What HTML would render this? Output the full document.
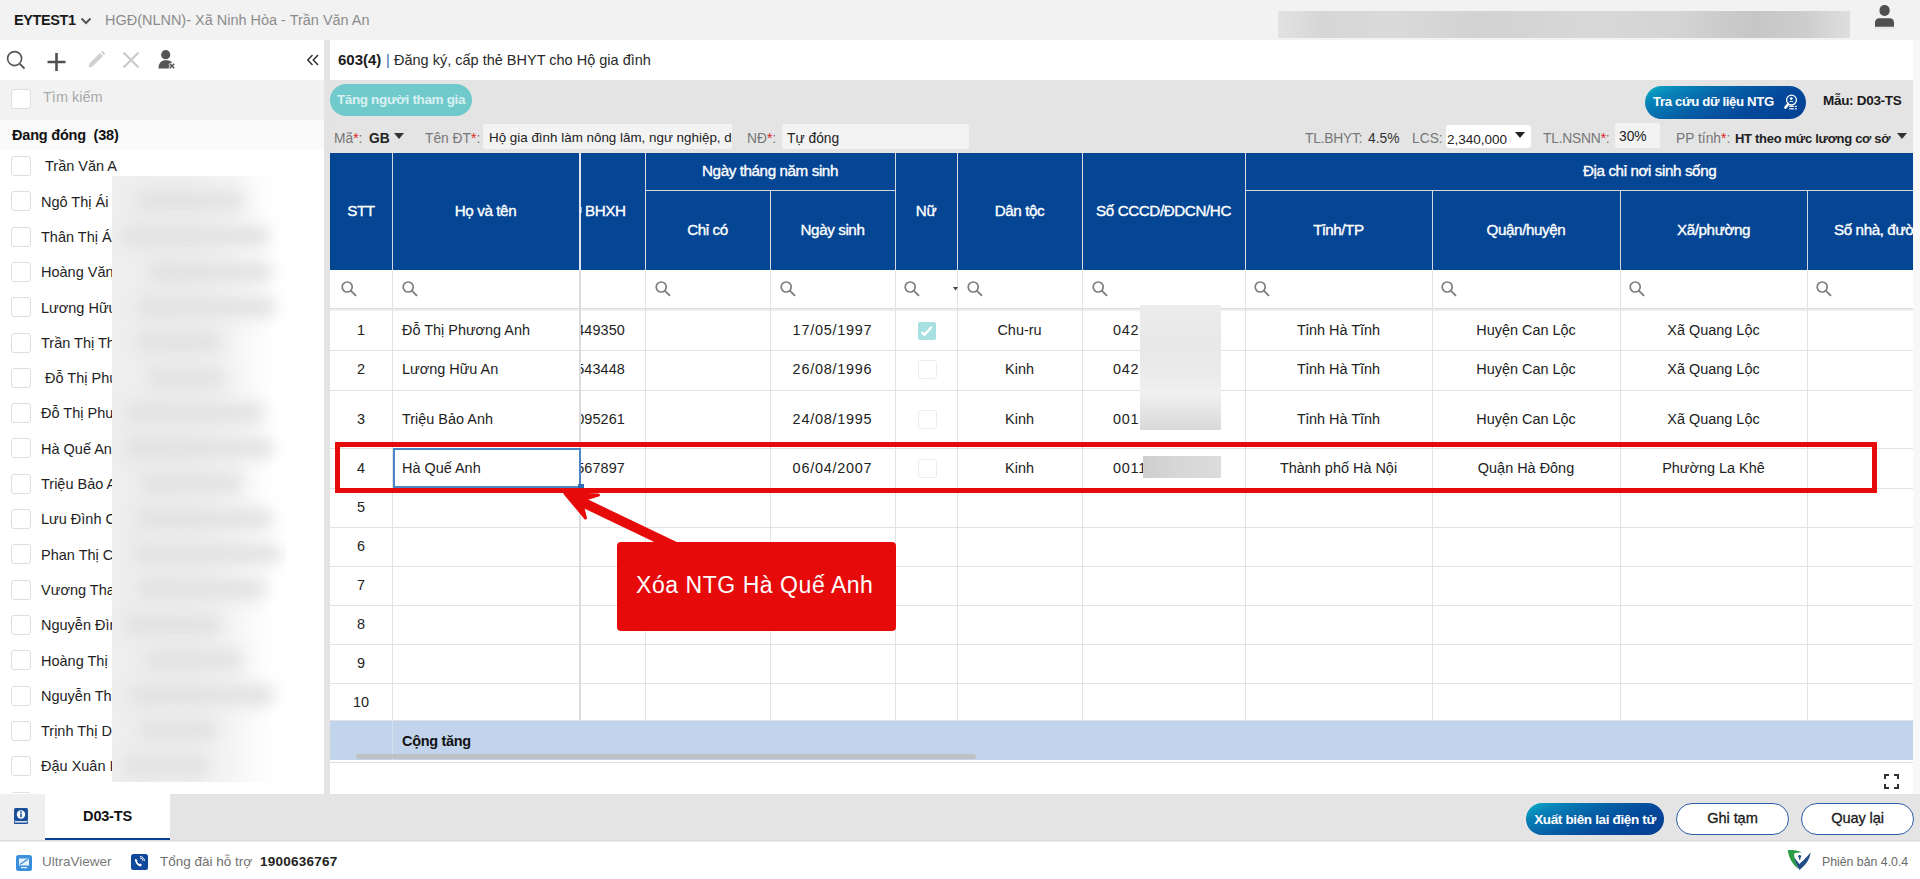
<!DOCTYPE html>
<html><head><meta charset="utf-8">
<style>
*{box-sizing:border-box;margin:0;padding:0}
html,body{width:1920px;height:879px;overflow:hidden;background:#f6f6f6;font-family:"Liberation Sans",sans-serif;color:#222}
.a{position:absolute}
.t{position:absolute;white-space:nowrap}
.cb{position:absolute;width:20px;height:20px;border:1px solid #dedede;border-radius:3px;background:#fff}
.cb2{position:absolute;width:20px;height:20px;border:1px solid #ececec;border-radius:3px;background:#fff}
svg{position:absolute;overflow:visible}
</style></head>
<body>

<div class="a" style="left:0px;top:0px;width:1920px;height:40px;background:#f2f2f2"></div>
<div class="t" style="left:14px;top:10.0px;height:20px;line-height:20px;font-size:14.5px;font-weight:bold;color:#1a1a1a;letter-spacing:-0.4px">EYTEST1</div>
<svg style="left:80px;top:16px" width="12" height="10" viewBox="0 0 12 10"><path d="M1.5 2.5 L6 7 L10.5 2.5" fill="none" stroke="#555" stroke-width="2"/></svg>
<div class="t" style="left:105px;top:10.0px;height:20px;line-height:20px;font-size:14.47px;font-weight:normal;color:#8c8c8c;">HGĐ(NLNN)- Xã Ninh Hòa - Trần Văn An</div>
<div class="a" style="left:1278px;top:11px;width:572px;height:27px;background:linear-gradient(90deg,#e2e2e2 0%,#d6d6d6 8%,#dadada 20%,#d2d2d2 35%,#d8d8d8 55%,#d4d4d4 70%,#c6c6c6 83%,#cdcdcd 92%,#dedede 100%);filter:blur(0.6px)"></div>
<svg style="left:1874px;top:4px" width="22" height="24" viewBox="0 0 22 24"><rect x="5.5" y="1" width="10.2" height="11" rx="5" fill="#505050"/><path d="M1 22.7 V18.7 Q1 14.2 5.5 14.2 H15.5 Q20 14.2 20 18.7 V22.7 Z" fill="#505050"/></svg>
<div class="a" style="left:1874px;top:27px;width:22px;height:4px;background:linear-gradient(180deg,rgba(0,0,0,0.05),rgba(0,0,0,0))"></div>
<div class="a" style="left:0px;top:40px;width:324px;height:754px;background:#fff"></div>
<div class="a" style="left:324px;top:40px;width:6px;height:754px;background:#e3e3e3"></div>
<svg style="left:6px;top:50px" width="20" height="20" viewBox="0 0 20 20"><circle cx="8.6" cy="8.6" r="7" fill="none" stroke="#555" stroke-width="1.6"/><path d="M13.8 13.8 L18.5 18.5" stroke="#555" stroke-width="1.8"/></svg>
<svg style="left:47px;top:52px" width="20" height="20" viewBox="0 0 20 20"><path d="M9.5 1 V19 M0.5 10 H18.5" stroke="#505050" stroke-width="2.6"/></svg>
<svg style="left:86px;top:50px" width="20" height="20" viewBox="0 0 20 20"><path d="M2.5 17.5 L3.5 13.5 L14 3 L17 6 L6.5 16.5 Z" fill="#cfcfcf"/><path d="M15 2 L16.5 0.8 L19.2 3.5 L18 5 Z" fill="#cfcfcf"/></svg>
<svg style="left:122px;top:51px" width="18" height="18" viewBox="0 0 18 18"><path d="M1.5 1.5 L16.5 16.5 M16.5 1.5 L1.5 16.5" stroke="#cccccc" stroke-width="2.4"/></svg>
<svg style="left:158px;top:49px" width="18" height="22" viewBox="0 0 18 22"><circle cx="7.7" cy="5.7" r="4.6" fill="#555"/><path d="M0.5 19.5 C0.5 12.5 5 11.2 7.7 11.2 C10.5 11.2 12.5 11.8 14 13 L11 19.5 Z" fill="#555"/><path d="M11.5 14.5 L16.5 19.5 M16.5 14.5 L11.5 19.5" stroke="#fff" stroke-width="3"/><path d="M11.8 14.8 L16.2 19.2 M16.2 14.8 L11.8 19.2" stroke="#555" stroke-width="1.6"/></svg>
<svg style="left:306px;top:53px" width="14" height="14" viewBox="0 0 14 14"><path d="M6.5 2 L1.8 7 L6.5 12 M12 2 L7.3 7 L12 12" fill="none" stroke="#333" stroke-width="1.5"/></svg>
<div class="a" style="left:0px;top:80px;width:324px;height:40px;background:#f2f2f2"></div>
<div class="cb" style="left:11px;top:89px"></div>
<div class="t" style="left:43px;top:87.0px;height:20px;line-height:20px;font-size:14.5px;font-weight:normal;color:#a9a9a9;">Tìm kiếm</div>
<div class="a" style="left:0px;top:120px;width:324px;height:30px;background:#fafafa"></div>
<div class="t" style="left:12px;top:125.0px;height:20px;line-height:20px;font-size:14.5px;font-weight:bold;color:#111;letter-spacing:-0.2px">Đang đóng&nbsp; (38)</div>
<div class="cb" style="left:11px;top:156.0px"></div>
<div class="t" style="left:45px;top:156.3px;height:20px;line-height:20px;font-size:14.5px;font-weight:normal;color:#1e1e1e;">Trần Văn A</div>
<div class="cb" style="left:11px;top:191.3px"></div>
<div class="t" style="left:41px;top:191.60000000000002px;height:20px;line-height:20px;font-size:14.5px;font-weight:normal;color:#1e1e1e;">Ngô Thị Ái</div>
<div class="cb" style="left:11px;top:226.6px"></div>
<div class="t" style="left:41px;top:226.9px;height:20px;line-height:20px;font-size:14.5px;font-weight:normal;color:#1e1e1e;">Thân Thị Á</div>
<div class="cb" style="left:11px;top:261.9px"></div>
<div class="t" style="left:41px;top:262.2px;height:20px;line-height:20px;font-size:14.5px;font-weight:normal;color:#1e1e1e;">Hoàng Văn</div>
<div class="cb" style="left:11px;top:297.2px"></div>
<div class="t" style="left:41px;top:297.5px;height:20px;line-height:20px;font-size:14.5px;font-weight:normal;color:#1e1e1e;">Lương Hữu</div>
<div class="cb" style="left:11px;top:332.5px"></div>
<div class="t" style="left:41px;top:332.8px;height:20px;line-height:20px;font-size:14.5px;font-weight:normal;color:#1e1e1e;">Trần Thị Th</div>
<div class="cb" style="left:11px;top:367.8px"></div>
<div class="t" style="left:45px;top:368.09999999999997px;height:20px;line-height:20px;font-size:14.5px;font-weight:normal;color:#1e1e1e;">Đỗ Thị Phu</div>
<div class="cb" style="left:11px;top:403.1px"></div>
<div class="t" style="left:41px;top:403.4px;height:20px;line-height:20px;font-size:14.5px;font-weight:normal;color:#1e1e1e;">Đỗ Thị Phu</div>
<div class="cb" style="left:11px;top:438.4px"></div>
<div class="t" style="left:41px;top:438.7px;height:20px;line-height:20px;font-size:14.5px;font-weight:normal;color:#1e1e1e;">Hà Quế An</div>
<div class="cb" style="left:11px;top:473.7px"></div>
<div class="t" style="left:41px;top:474.0px;height:20px;line-height:20px;font-size:14.5px;font-weight:normal;color:#1e1e1e;">Triệu Bảo A</div>
<div class="cb" style="left:11px;top:509.0px"></div>
<div class="t" style="left:41px;top:509.29999999999995px;height:20px;line-height:20px;font-size:14.5px;font-weight:normal;color:#1e1e1e;">Lưu Đình C</div>
<div class="cb" style="left:11px;top:544.3px"></div>
<div class="t" style="left:41px;top:544.5999999999999px;height:20px;line-height:20px;font-size:14.5px;font-weight:normal;color:#1e1e1e;">Phan Thị C</div>
<div class="cb" style="left:11px;top:579.6px"></div>
<div class="t" style="left:41px;top:579.8999999999999px;height:20px;line-height:20px;font-size:14.5px;font-weight:normal;color:#1e1e1e;">Vương Tha</div>
<div class="cb" style="left:11px;top:614.9px"></div>
<div class="t" style="left:41px;top:615.1999999999999px;height:20px;line-height:20px;font-size:14.5px;font-weight:normal;color:#1e1e1e;">Nguyễn Đìn</div>
<div class="cb" style="left:11px;top:650.2px"></div>
<div class="t" style="left:41px;top:650.4999999999999px;height:20px;line-height:20px;font-size:14.5px;font-weight:normal;color:#1e1e1e;">Hoàng Thị</div>
<div class="cb" style="left:11px;top:685.5px"></div>
<div class="t" style="left:41px;top:685.8px;height:20px;line-height:20px;font-size:14.5px;font-weight:normal;color:#1e1e1e;">Nguyễn Th</div>
<div class="cb" style="left:11px;top:720.8px"></div>
<div class="t" style="left:41px;top:721.0999999999999px;height:20px;line-height:20px;font-size:14.5px;font-weight:normal;color:#1e1e1e;">Trịnh Thị D</div>
<div class="cb" style="left:11px;top:756.1px"></div>
<div class="t" style="left:41px;top:756.3999999999999px;height:20px;line-height:20px;font-size:14.5px;font-weight:normal;color:#1e1e1e;">Đậu Xuân I</div>
<div class="a" style="left:12px;top:792px;width:18px;height:1px;background:#e2e2e2"></div>
<div class="a" style="left:112px;top:176px;width:175px;height:606px;overflow:hidden">
<div class="a" style="left:0;top:0;width:175px;height:606px;background:linear-gradient(90deg,#eeeeee 0%,#efefef 45%,#f5f5f5 70%,rgba(255,255,255,0) 93%)"></div>
<div class="a" style="left:23px;top:15px;width:110px;height:20px;background:#e1e1e1;filter:blur(8px);border-radius:10px"></div>
<div class="a" style="left:9px;top:50px;width:149px;height:20px;background:#e1e1e1;filter:blur(8px);border-radius:10px"></div>
<div class="a" style="left:34px;top:86px;width:127px;height:20px;background:#e1e1e1;filter:blur(8px);border-radius:10px"></div>
<div class="a" style="left:25px;top:121px;width:140px;height:20px;background:#e1e1e1;filter:blur(8px);border-radius:10px"></div>
<div class="a" style="left:24px;top:156px;width:88px;height:20px;background:#e1e1e1;filter:blur(8px);border-radius:10px"></div>
<div class="a" style="left:34px;top:192px;width:81px;height:20px;background:#e1e1e1;filter:blur(8px);border-radius:10px"></div>
<div class="a" style="left:13px;top:227px;width:140px;height:20px;background:#e1e1e1;filter:blur(8px);border-radius:10px"></div>
<div class="a" style="left:12px;top:262px;width:150px;height:20px;background:#e1e1e1;filter:blur(8px);border-radius:10px"></div>
<div class="a" style="left:27px;top:297px;width:104px;height:20px;background:#e1e1e1;filter:blur(8px);border-radius:10px"></div>
<div class="a" style="left:22px;top:333px;width:140px;height:20px;background:#e1e1e1;filter:blur(8px);border-radius:10px"></div>
<div class="a" style="left:20px;top:368px;width:150px;height:20px;background:#e1e1e1;filter:blur(8px);border-radius:10px"></div>
<div class="a" style="left:25px;top:403px;width:130px;height:20px;background:#e1e1e1;filter:blur(8px);border-radius:10px"></div>
<div class="a" style="left:12px;top:439px;width:99px;height:20px;background:#e1e1e1;filter:blur(8px);border-radius:10px"></div>
<div class="a" style="left:32px;top:474px;width:99px;height:20px;background:#e1e1e1;filter:blur(8px);border-radius:10px"></div>
<div class="a" style="left:17px;top:509px;width:146px;height:20px;background:#e1e1e1;filter:blur(8px);border-radius:10px"></div>
<div class="a" style="left:26px;top:544px;width:81px;height:20px;background:#e1e1e1;filter:blur(8px);border-radius:10px"></div>
<div class="a" style="left:10px;top:580px;width:88px;height:20px;background:#e1e1e1;filter:blur(8px);border-radius:10px"></div>
</div>
<div class="a" style="left:330px;top:40px;width:1583px;height:40px;background:#fff"></div>
<div class="a" style="left:1913px;top:40px;width:7px;height:754px;background:#f8f8f8"></div>
<div class="t" style="left:338px;top:49.5px;height:20px;line-height:20px;font-size:15px;font-weight:bold;color:#1a1a1a;">603(4)</div>
<div class="t" style="left:386px;top:49.5px;height:20px;line-height:20px;font-size:14.5px;font-weight:normal;color:#2f6db5;">|</div>
<div class="t" style="left:394px;top:49.5px;height:20px;line-height:20px;font-size:14.5px;font-weight:normal;color:#2a2a2a;">Đăng ký, cấp thẻ BHYT cho Hộ gia đình</div>
<div class="a" style="left:330px;top:80px;width:1583px;height:73px;background:#e4e4e4"></div>
<div class="a" style="left:330px;top:84px;width:142px;height:32px;background:#70cacb;border-radius:16px"></div>
<div class="t" style="left:330px;width:142px;text-align:center;top:90.0px;height:20px;line-height:20px;font-size:13.5px;font-weight:bold;color:#d9f1f1;letter-spacing:-0.35px">Tăng người tham gia</div>
<div class="a" style="left:1645px;top:86px;width:161px;height:33px;background:linear-gradient(155deg,#0ab0c6 0%,#0781b8 18%,#0560a6 42%,#04489a 68%,#033f91 100%);border-radius:17px"></div>
<div class="t" style="left:1653px;top:92.0px;height:20px;line-height:20px;font-size:13.2px;font-weight:bold;color:#fff;letter-spacing:-0.35px">Tra cứu dữ liệu NTG</div>
<svg style="left:1782px;top:94px" width="17" height="17" viewBox="0 0 17 17"><circle cx="9.5" cy="6.1" r="4.9" fill="none" stroke="#fff" stroke-width="1.3"/><circle cx="9.3" cy="4.6" r="1.4" fill="#fff"/><path d="M7 8.4 C7.4 6.9 11.2 6.9 11.6 8.4" fill="none" stroke="#fff" stroke-width="1"/><path d="M5.8 10.6 L3.4 13.6" stroke="#fff" stroke-width="2.6" stroke-linecap="round"/><rect x="7.2" y="11.8" width="4.6" height="1.2" fill="#fff"/><rect x="12.8" y="11.8" width="2" height="1.2" fill="#fff"/><rect x="7.2" y="14.2" width="4.6" height="1.2" fill="#fff"/><rect x="12.8" y="14.2" width="2" height="1.2" fill="#fff"/></svg>
<div class="t" style="left:1823px;top:91.0px;height:20px;line-height:20px;font-size:13.5px;font-weight:bold;color:#1a1a1a;letter-spacing:-0.3px">Mẫu: D03-TS</div>
<div class="t" style="left:334px;top:128.5px;height:20px;line-height:20px;font-size:13.8px;font-weight:normal;color:#777;">Mã<span style="color:#e02020">*</span>:</div>
<div class="t" style="left:369px;top:128.5px;height:20px;line-height:20px;font-size:13.8px;font-weight:bold;color:#222;">GB</div>
<svg style="left:394px;top:133px" width="10" height="6" viewBox="0 0 10 6"><path d="M0 0 H10 L5 6 Z" fill="#333"/></svg>
<div class="t" style="left:425px;top:128.5px;height:20px;line-height:20px;font-size:13.8px;font-weight:normal;color:#777;">Tên ĐT<span style="color:#e02020">*</span>:</div>
<div class="a" style="left:483px;top:124px;width:249px;height:25px;background:#f3f3f3;border-radius:3px;overflow:hidden"></div>
<div class="a" style="left:483px;top:124px;width:249px;height:25px;overflow:hidden">
<div class="t" style="left:6px;top:4.0px;height:20px;line-height:20px;font-size:13.4px;font-weight:normal;color:#222;">Hộ gia đình làm nông lâm, ngư nghiệp, d</div>
</div>
<div class="t" style="left:747px;top:128.5px;height:20px;line-height:20px;font-size:13.8px;font-weight:normal;color:#777;">NĐ<span style="color:#e02020">*</span>:</div>
<div class="a" style="left:782px;top:124px;width:187px;height:25px;background:#f3f3f3;border-radius:3px"></div>
<div class="t" style="left:787px;top:128.5px;height:20px;line-height:20px;font-size:13.8px;font-weight:normal;color:#222;">Tự đóng</div>
<div class="t" style="left:1305px;top:128.5px;height:20px;line-height:20px;font-size:13.8px;font-weight:normal;color:#777;letter-spacing:-0.2px">TL.BHYT:</div>
<div class="t" style="left:1368px;top:128.5px;height:20px;line-height:20px;font-size:13.8px;font-weight:normal;color:#333;">4.5%</div>
<div class="t" style="left:1412px;top:128.5px;height:20px;line-height:20px;font-size:13.8px;font-weight:normal;color:#777;">LCS:</div>
<div class="a" style="left:1446px;top:125px;width:85px;height:23px;background:#fff;border-radius:3px"></div>
<div class="t" style="left:1447px;top:129.5px;height:20px;line-height:20px;font-size:13.5px;font-weight:normal;color:#222;">2,340,000</div>
<svg style="left:1515px;top:132px" width="10" height="6" viewBox="0 0 10 6"><path d="M0 0 H10 L5 6 Z" fill="#222"/></svg>
<div class="t" style="left:1543px;top:128.5px;height:20px;line-height:20px;font-size:13.8px;font-weight:normal;color:#777;letter-spacing:-0.2px">TL.NSNN<span style="color:#e02020">*</span>:</div>
<div class="a" style="left:1615px;top:123px;width:45px;height:25px;background:#f3f3f3;border-radius:3px"></div>
<div class="t" style="left:1619px;top:126.5px;height:20px;line-height:20px;font-size:13.8px;font-weight:normal;color:#222;">30%</div>
<div class="t" style="left:1676px;top:128.5px;height:20px;line-height:20px;font-size:13.8px;font-weight:normal;color:#777;">PP tính<span style="color:#e02020">*</span>:</div>
<div class="t" style="left:1735px;top:129.0px;height:20px;line-height:20px;font-size:13px;font-weight:bold;color:#222;letter-spacing:-0.3px">HT theo mức lương cơ sở</div>
<svg style="left:1897px;top:133px" width="10" height="6" viewBox="0 0 10 6"><path d="M0 0 H10 L5 6 Z" fill="#333"/></svg>
<div class="a" style="left:330px;top:153px;width:1583px;height:641px;background:#fff;overflow:hidden">
<div class="a" style="left:0px;top:0px;width:1583px;height:117px;background:#044594"></div>
<div class="a" style="left:62px;top:0px;width:1px;height:117px;background:#d3d8e0"></div>
<div class="a" style="left:315px;top:0px;width:1px;height:117px;background:#d3d8e0"></div>
<div class="a" style="left:440px;top:37px;width:1px;height:80px;background:#d3d8e0"></div>
<div class="a" style="left:627px;top:0px;width:1px;height:117px;background:#d3d8e0"></div>
<div class="a" style="left:752px;top:0px;width:1px;height:117px;background:#d3d8e0"></div>
<div class="a" style="left:915px;top:0px;width:1px;height:117px;background:#d3d8e0"></div>
<div class="a" style="left:1102px;top:37px;width:1px;height:80px;background:#d3d8e0"></div>
<div class="a" style="left:1290px;top:37px;width:1px;height:80px;background:#d3d8e0"></div>
<div class="a" style="left:1477px;top:37px;width:1px;height:80px;background:#d3d8e0"></div>
<div class="a" style="left:565px;top:0px;width:1px;height:117px;background:#d3d8e0"></div>
<div class="a" style="left:249px;top:0px;width:2px;height:117px;background:#dfe5ef"></div>
<div class="a" style="left:315px;top:37px;width:250px;height:1px;background:#d3d8e0"></div>
<div class="a" style="left:915px;top:37px;width:668px;height:1px;background:#d3d8e0"></div>
<div class="t" style="left:0px;width:62px;text-align:center;top:47.69999999999999px;height:20px;line-height:20px;font-size:15.2px;font-weight:normal;color:#fff;letter-spacing:-0.4px;-webkit-text-stroke:0.35px #fff">STT</div>
<div class="t" style="left:62px;width:187px;text-align:center;top:47.69999999999999px;height:20px;line-height:20px;font-size:15.2px;font-weight:normal;color:#fff;letter-spacing:-0.4px;-webkit-text-stroke:0.35px #fff">Họ và tên</div>
<div class="t" style="left:255px;top:47.69999999999999px;height:20px;line-height:20px;font-size:15.2px;font-weight:normal;color:#fff;letter-spacing:-0.4px;-webkit-text-stroke:0.35px #fff">BHXH</div>
<div class="a" style="left:250px;top:54px;width:2px;height:6px;background:#fff;opacity:0.5"></div>
<div class="t" style="left:315px;width:250px;text-align:center;top:8.199999999999989px;height:20px;line-height:20px;font-size:15.2px;font-weight:normal;color:#fff;letter-spacing:-0.4px;-webkit-text-stroke:0.35px #fff">Ngày tháng năm sinh</div>
<div class="t" style="left:315px;width:125px;text-align:center;top:66.69999999999999px;height:20px;line-height:20px;font-size:15.2px;font-weight:normal;color:#fff;letter-spacing:-0.4px;-webkit-text-stroke:0.35px #fff">Chỉ có</div>
<div class="t" style="left:440px;width:125px;text-align:center;top:66.69999999999999px;height:20px;line-height:20px;font-size:15.2px;font-weight:normal;color:#fff;letter-spacing:-0.4px;-webkit-text-stroke:0.35px #fff">Ngày sinh</div>
<div class="t" style="left:565px;width:62px;text-align:center;top:47.69999999999999px;height:20px;line-height:20px;font-size:15.2px;font-weight:normal;color:#fff;letter-spacing:-0.4px;-webkit-text-stroke:0.35px #fff">Nữ</div>
<div class="t" style="left:627px;width:125px;text-align:center;top:47.69999999999999px;height:20px;line-height:20px;font-size:15.2px;font-weight:normal;color:#fff;letter-spacing:-0.4px;-webkit-text-stroke:0.35px #fff">Dân tộc</div>
<div class="t" style="left:752px;width:163px;text-align:center;top:47.69999999999999px;height:20px;line-height:20px;font-size:15.2px;font-weight:normal;color:#fff;letter-spacing:-0.4px;-webkit-text-stroke:0.35px #fff">Số CCCD/ĐDCN/HC</div>
<div class="t" style="left:1253px;top:8.199999999999989px;height:20px;line-height:20px;font-size:15.2px;font-weight:normal;color:#fff;letter-spacing:-0.4px;-webkit-text-stroke:0.35px #fff">Địa chỉ nơi sinh sống</div>
<div class="t" style="left:915px;width:187px;text-align:center;top:66.69999999999999px;height:20px;line-height:20px;font-size:15.2px;font-weight:normal;color:#fff;letter-spacing:-0.4px;-webkit-text-stroke:0.35px #fff">Tỉnh/TP</div>
<div class="t" style="left:1102px;width:188px;text-align:center;top:66.69999999999999px;height:20px;line-height:20px;font-size:15.2px;font-weight:normal;color:#fff;letter-spacing:-0.4px;-webkit-text-stroke:0.35px #fff">Quận/huyện</div>
<div class="t" style="left:1290px;width:187px;text-align:center;top:66.69999999999999px;height:20px;line-height:20px;font-size:15.2px;font-weight:normal;color:#fff;letter-spacing:-0.4px;-webkit-text-stroke:0.35px #fff">Xã/phường</div>
<div class="t" style="left:1504px;top:66.69999999999999px;height:20px;line-height:20px;font-size:15.2px;font-weight:normal;color:#fff;letter-spacing:-0.4px;-webkit-text-stroke:0.35px #fff">Số nhà, đường</div>
<div class="a" style="left:0px;top:155px;width:1583px;height:1px;background:#dcdcdc"></div>
<div class="a" style="left:0px;top:156px;width:1583px;height:2px;background:#efefef"></div>
<div class="a" style="left:0px;top:197px;width:1583px;height:1px;background:#e2e2e2"></div>
<div class="a" style="left:0px;top:237px;width:1583px;height:1px;background:#e2e2e2"></div>
<div class="a" style="left:0px;top:295px;width:1583px;height:1px;background:#e2e2e2"></div>
<div class="a" style="left:0px;top:335px;width:1583px;height:1px;background:#e2e2e2"></div>
<div class="a" style="left:0px;top:374px;width:1583px;height:1px;background:#e2e2e2"></div>
<div class="a" style="left:0px;top:413px;width:1583px;height:1px;background:#e2e2e2"></div>
<div class="a" style="left:0px;top:452px;width:1583px;height:1px;background:#e2e2e2"></div>
<div class="a" style="left:0px;top:491px;width:1583px;height:1px;background:#e2e2e2"></div>
<div class="a" style="left:0px;top:530px;width:1583px;height:1px;background:#e2e2e2"></div>
<div class="a" style="left:0px;top:567px;width:1583px;height:1px;background:#e2e2e2"></div>
<div class="a" style="left:62px;top:117px;width:1px;height:451px;background:#e2e2e2"></div>
<div class="a" style="left:315px;top:117px;width:1px;height:451px;background:#e2e2e2"></div>
<div class="a" style="left:440px;top:117px;width:1px;height:451px;background:#e2e2e2"></div>
<div class="a" style="left:565px;top:117px;width:1px;height:451px;background:#e2e2e2"></div>
<div class="a" style="left:627px;top:117px;width:1px;height:451px;background:#e2e2e2"></div>
<div class="a" style="left:752px;top:117px;width:1px;height:451px;background:#e2e2e2"></div>
<div class="a" style="left:915px;top:117px;width:1px;height:451px;background:#e2e2e2"></div>
<div class="a" style="left:1102px;top:117px;width:1px;height:451px;background:#e2e2e2"></div>
<div class="a" style="left:1290px;top:117px;width:1px;height:451px;background:#e2e2e2"></div>
<div class="a" style="left:1477px;top:117px;width:1px;height:451px;background:#e2e2e2"></div>
<div class="a" style="left:249px;top:117px;width:2px;height:451px;background:#dcdcdc"></div>
<svg style="left:10px;top:127px" width="16" height="16" viewBox="0 0 16 16"><circle cx="7.2" cy="7" r="5" fill="none" stroke="#7d7d7d" stroke-width="1.7"/><path d="M10.8 10.6 L16 15.8" stroke="#7d7d7d" stroke-width="1.9"/></svg>
<svg style="left:71px;top:127px" width="16" height="16" viewBox="0 0 16 16"><circle cx="7.2" cy="7" r="5" fill="none" stroke="#7d7d7d" stroke-width="1.7"/><path d="M10.8 10.6 L16 15.8" stroke="#7d7d7d" stroke-width="1.9"/></svg>
<svg style="left:324px;top:127px" width="16" height="16" viewBox="0 0 16 16"><circle cx="7.2" cy="7" r="5" fill="none" stroke="#7d7d7d" stroke-width="1.7"/><path d="M10.8 10.6 L16 15.8" stroke="#7d7d7d" stroke-width="1.9"/></svg>
<svg style="left:449px;top:127px" width="16" height="16" viewBox="0 0 16 16"><circle cx="7.2" cy="7" r="5" fill="none" stroke="#7d7d7d" stroke-width="1.7"/><path d="M10.8 10.6 L16 15.8" stroke="#7d7d7d" stroke-width="1.9"/></svg>
<svg style="left:573px;top:127px" width="16" height="16" viewBox="0 0 16 16"><circle cx="7.2" cy="7" r="5" fill="none" stroke="#7d7d7d" stroke-width="1.7"/><path d="M10.8 10.6 L16 15.8" stroke="#7d7d7d" stroke-width="1.9"/></svg>
<svg style="left:636px;top:127px" width="16" height="16" viewBox="0 0 16 16"><circle cx="7.2" cy="7" r="5" fill="none" stroke="#7d7d7d" stroke-width="1.7"/><path d="M10.8 10.6 L16 15.8" stroke="#7d7d7d" stroke-width="1.9"/></svg>
<svg style="left:761px;top:127px" width="16" height="16" viewBox="0 0 16 16"><circle cx="7.2" cy="7" r="5" fill="none" stroke="#7d7d7d" stroke-width="1.7"/><path d="M10.8 10.6 L16 15.8" stroke="#7d7d7d" stroke-width="1.9"/></svg>
<svg style="left:923px;top:127px" width="16" height="16" viewBox="0 0 16 16"><circle cx="7.2" cy="7" r="5" fill="none" stroke="#7d7d7d" stroke-width="1.7"/><path d="M10.8 10.6 L16 15.8" stroke="#7d7d7d" stroke-width="1.9"/></svg>
<svg style="left:1110px;top:127px" width="16" height="16" viewBox="0 0 16 16"><circle cx="7.2" cy="7" r="5" fill="none" stroke="#7d7d7d" stroke-width="1.7"/><path d="M10.8 10.6 L16 15.8" stroke="#7d7d7d" stroke-width="1.9"/></svg>
<svg style="left:1298px;top:127px" width="16" height="16" viewBox="0 0 16 16"><circle cx="7.2" cy="7" r="5" fill="none" stroke="#7d7d7d" stroke-width="1.7"/><path d="M10.8 10.6 L16 15.8" stroke="#7d7d7d" stroke-width="1.9"/></svg>
<svg style="left:1485px;top:127px" width="16" height="16" viewBox="0 0 16 16"><circle cx="7.2" cy="7" r="5" fill="none" stroke="#7d7d7d" stroke-width="1.7"/><path d="M10.8 10.6 L16 15.8" stroke="#7d7d7d" stroke-width="1.9"/></svg>
<svg style="left:623px;top:134px" width="5" height="4" viewBox="0 0 5 4"><path d="M0 0 H5 L2.5 3.5 Z" fill="#444"/></svg>
<div class="t" style="left:0px;width:62px;text-align:center;top:167.0px;height:20px;line-height:20px;font-size:14.45px;font-weight:normal;color:#222;">1</div>
<div class="t" style="left:72px;top:167.0px;height:20px;line-height:20px;font-size:14.45px;font-weight:normal;color:#1e1e1e;">Đỗ Thị Phương Anh</div>
<div class="a" style="left:251px;top:167px;width:64px;height:20px;overflow:hidden">
<div class="t" style="right:20px;top:0;height:20px;line-height:20px;font-size:14.45px;color:#1e1e1e;letter-spacing:0.1px">449350</div>
</div>
<div class="t" style="left:440px;width:125px;text-align:center;top:167.0px;height:20px;line-height:20px;font-size:14.45px;font-weight:normal;color:#222;letter-spacing:0.75px">17/05/1997</div>
<div class="a" style="left:588px;top:169px;width:18px;height:18px;background:#a6e0e0;border-radius:2px"></div>
<svg style="left:588px;top:169px" width="18" height="18" viewBox="0 0 18 18"><path d="M3.6 10.2 L6.5 12.9 L13.8 4.8" fill="none" stroke="#fff" stroke-width="2.4"/></svg>
<div class="t" style="left:627px;width:125px;text-align:center;top:167.0px;height:20px;line-height:20px;font-size:14.45px;font-weight:normal;color:#222;">Chu-ru</div>
<div class="t" style="left:783px;top:167.0px;height:20px;line-height:20px;font-size:14.45px;font-weight:normal;color:#222;letter-spacing:0.75px">042</div>
<div class="t" style="left:915px;width:187px;text-align:center;top:167.0px;height:20px;line-height:20px;font-size:14.45px;font-weight:normal;color:#222;">Tỉnh Hà Tĩnh</div>
<div class="t" style="left:1102px;width:188px;text-align:center;top:167.0px;height:20px;line-height:20px;font-size:14.45px;font-weight:normal;color:#222;">Huyện Can Lộc</div>
<div class="t" style="left:1290px;width:187px;text-align:center;top:167.0px;height:20px;line-height:20px;font-size:14.45px;font-weight:normal;color:#222;">Xã Quang Lộc</div>
<div class="t" style="left:0px;width:62px;text-align:center;top:205.5px;height:20px;line-height:20px;font-size:14.45px;font-weight:normal;color:#222;">2</div>
<div class="t" style="left:72px;top:205.5px;height:20px;line-height:20px;font-size:14.45px;font-weight:normal;color:#1e1e1e;">Lương Hữu An</div>
<div class="a" style="left:251px;top:205.5px;width:64px;height:20px;overflow:hidden">
<div class="t" style="right:20px;top:0;height:20px;line-height:20px;font-size:14.45px;color:#1e1e1e;letter-spacing:0.1px">543448</div>
</div>
<div class="t" style="left:440px;width:125px;text-align:center;top:205.5px;height:20px;line-height:20px;font-size:14.45px;font-weight:normal;color:#222;letter-spacing:0.75px">26/08/1996</div>
<div class="cb2" style="left:587.5px;top:206.5px;width:19px;height:19px"></div>
<div class="t" style="left:627px;width:125px;text-align:center;top:205.5px;height:20px;line-height:20px;font-size:14.45px;font-weight:normal;color:#222;">Kinh</div>
<div class="t" style="left:783px;top:205.5px;height:20px;line-height:20px;font-size:14.45px;font-weight:normal;color:#222;letter-spacing:0.75px">042</div>
<div class="t" style="left:915px;width:187px;text-align:center;top:205.5px;height:20px;line-height:20px;font-size:14.45px;font-weight:normal;color:#222;">Tỉnh Hà Tĩnh</div>
<div class="t" style="left:1102px;width:188px;text-align:center;top:205.5px;height:20px;line-height:20px;font-size:14.45px;font-weight:normal;color:#222;">Huyện Can Lộc</div>
<div class="t" style="left:1290px;width:187px;text-align:center;top:205.5px;height:20px;line-height:20px;font-size:14.45px;font-weight:normal;color:#222;">Xã Quang Lộc</div>
<div class="t" style="left:0px;width:62px;text-align:center;top:255.5px;height:20px;line-height:20px;font-size:14.45px;font-weight:normal;color:#222;">3</div>
<div class="t" style="left:72px;top:255.5px;height:20px;line-height:20px;font-size:14.45px;font-weight:normal;color:#1e1e1e;">Triệu Bảo Anh</div>
<div class="a" style="left:251px;top:255.5px;width:64px;height:20px;overflow:hidden">
<div class="t" style="right:20px;top:0;height:20px;line-height:20px;font-size:14.45px;color:#1e1e1e;letter-spacing:0.1px">095261</div>
</div>
<div class="t" style="left:440px;width:125px;text-align:center;top:255.5px;height:20px;line-height:20px;font-size:14.45px;font-weight:normal;color:#222;letter-spacing:0.75px">24/08/1995</div>
<div class="cb2" style="left:587.5px;top:256.5px;width:19px;height:19px"></div>
<div class="t" style="left:627px;width:125px;text-align:center;top:255.5px;height:20px;line-height:20px;font-size:14.45px;font-weight:normal;color:#222;">Kinh</div>
<div class="t" style="left:783px;top:255.5px;height:20px;line-height:20px;font-size:14.45px;font-weight:normal;color:#222;letter-spacing:0.75px">001</div>
<div class="t" style="left:915px;width:187px;text-align:center;top:255.5px;height:20px;line-height:20px;font-size:14.45px;font-weight:normal;color:#222;">Tỉnh Hà Tĩnh</div>
<div class="t" style="left:1102px;width:188px;text-align:center;top:255.5px;height:20px;line-height:20px;font-size:14.45px;font-weight:normal;color:#222;">Huyện Can Lộc</div>
<div class="t" style="left:1290px;width:187px;text-align:center;top:255.5px;height:20px;line-height:20px;font-size:14.45px;font-weight:normal;color:#222;">Xã Quang Lộc</div>
<div class="t" style="left:0px;width:62px;text-align:center;top:304.5px;height:20px;line-height:20px;font-size:14.45px;font-weight:normal;color:#222;">4</div>
<div class="t" style="left:72px;top:304.5px;height:20px;line-height:20px;font-size:14.45px;font-weight:normal;color:#1e1e1e;">Hà Quế Anh</div>
<div class="a" style="left:251px;top:304.5px;width:64px;height:20px;overflow:hidden">
<div class="t" style="right:20px;top:0;height:20px;line-height:20px;font-size:14.45px;color:#1e1e1e;letter-spacing:0.1px">567897</div>
</div>
<div class="t" style="left:440px;width:125px;text-align:center;top:304.5px;height:20px;line-height:20px;font-size:14.45px;font-weight:normal;color:#222;letter-spacing:0.75px">06/04/2007</div>
<div class="cb2" style="left:587.5px;top:305.5px;width:19px;height:19px"></div>
<div class="t" style="left:627px;width:125px;text-align:center;top:304.5px;height:20px;line-height:20px;font-size:14.45px;font-weight:normal;color:#222;">Kinh</div>
<div class="t" style="left:783px;top:304.5px;height:20px;line-height:20px;font-size:14.45px;font-weight:normal;color:#222;letter-spacing:0.75px">0011</div>
<div class="t" style="left:915px;width:187px;text-align:center;top:304.5px;height:20px;line-height:20px;font-size:14.45px;font-weight:normal;color:#222;">Thành phố Hà Nội</div>
<div class="t" style="left:1102px;width:188px;text-align:center;top:304.5px;height:20px;line-height:20px;font-size:14.45px;font-weight:normal;color:#222;">Quận Hà Đông</div>
<div class="t" style="left:1290px;width:187px;text-align:center;top:304.5px;height:20px;line-height:20px;font-size:14.45px;font-weight:normal;color:#222;">Phường La Khê</div>
<div class="a" style="left:810px;top:152px;width:81px;height:125px;background:linear-gradient(180deg,#ececec 0%,#e8e8e8 30%,#ebebeb 55%,#f0f0f0 70%,#e2e2e2 88%,#d9d9d9 100%);border-radius:1px"></div>
<div class="a" style="left:813px;top:303px;width:78px;height:22px;background:linear-gradient(90deg,#cfcfcf 0%,#d6d6d6 40%,#dcdcdc 100%)"></div>
<div class="t" style="left:0px;width:62px;text-align:center;top:344.0px;height:20px;line-height:20px;font-size:14.45px;font-weight:normal;color:#222;">5</div>
<div class="t" style="left:0px;width:62px;text-align:center;top:383.0px;height:20px;line-height:20px;font-size:14.45px;font-weight:normal;color:#222;">6</div>
<div class="t" style="left:0px;width:62px;text-align:center;top:422.0px;height:20px;line-height:20px;font-size:14.45px;font-weight:normal;color:#222;">7</div>
<div class="t" style="left:0px;width:62px;text-align:center;top:461.0px;height:20px;line-height:20px;font-size:14.45px;font-weight:normal;color:#222;">8</div>
<div class="t" style="left:0px;width:62px;text-align:center;top:499.5px;height:20px;line-height:20px;font-size:14.45px;font-weight:normal;color:#222;">9</div>
<div class="t" style="left:0px;width:62px;text-align:center;top:538.5px;height:20px;line-height:20px;font-size:14.45px;font-weight:normal;color:#222;">10</div>
<div class="a" style="left:63px;top:295px;width:188px;height:40px;border:2px solid #4d86c6;background:transparent"></div>
<div class="a" style="left:248px;top:331px;width:6px;height:6px;background:#2f6db5"></div>
<div class="a" style="left:0px;top:568px;width:1583px;height:39px;background:#c2d4ec"></div>
<div class="a" style="left:62px;top:568px;width:1px;height:39px;background:#d6e0ee"></div>
<div class="t" style="left:72px;top:577.5px;height:20px;line-height:20px;font-size:14.45px;font-weight:bold;color:#111;letter-spacing:-0.3px">Cộng tăng</div>
<div class="a" style="left:26px;top:601px;width:620px;height:5px;background:#bdbdbd;border-radius:2px;opacity:0.85"></div>
<div class="a" style="left:0px;top:609px;width:1583px;height:1px;background:#dedede"></div>
<svg style="left:1554px;top:621px" width="15" height="15" viewBox="0 0 15 15"><path d="M1 5 V1 H5 M10 1 H14 V5 M14 10 V14 H10 M5 14 H1 V10" fill="none" stroke="#333" stroke-width="2"/></svg>
</div>
<div class="a" style="left:335px;top:442px;width:1542px;height:51px;border:5px solid #e60a0a"></div>
<svg style="left:0;top:0" width="1920" height="879" viewBox="0 0 1920 879"><path d="M584 497.6 L706 556 L683.5 556 L581 506.9 Z" fill="#e60a0a"/><path d="M565 493.5 L598.5 495 L585 499 L582.5 506 L585.5 518 Z" fill="#e60a0a" stroke="#e60a0a" stroke-width="3" stroke-linejoin="round"/></svg>
<div class="a" style="left:617px;top:542px;width:279px;height:89px;background:#e60a0a;border-radius:4px"></div>
<div class="t" style="left:636px;top:569.5px;height:30px;line-height:30px;font-size:23px;font-weight:normal;color:#fff;letter-spacing:0.55px">Xóa NTG Hà Quế Anh</div>
<div class="a" style="left:0px;top:794px;width:1920px;height:46px;background:#e4e4e4"></div>
<div class="a" style="left:0px;top:794px;width:45px;height:46px;background:#efefef"></div>
<div class="a" style="left:45px;top:794px;width:125px;height:46px;background:#fff"></div>
<div class="a" style="left:45px;top:838px;width:125px;height:2px;background:#0b3f91"></div>
<div class="a" style="left:0px;top:840px;width:1920px;height:2px;background:linear-gradient(180deg,#d4d4d4,#f2f2f2)"></div>
<div class="t" style="left:45px;width:125px;text-align:center;top:806.0px;height:20px;line-height:20px;font-size:14.5px;font-weight:bold;color:#111;letter-spacing:-0.2px">D03-TS</div>
<svg style="left:14px;top:808px" width="14" height="16" viewBox="0 0 14 16"><rect x="0" y="0" width="14" height="13" rx="1.5" fill="#1b4f98"/><rect x="0" y="13" width="14" height="3" rx="1" fill="#1b4f98"/><rect x="1" y="13.2" width="12" height="1.3" fill="#fff"/><circle cx="7" cy="6.5" r="4.2" fill="#fff"/><rect x="6.2" y="5.5" width="1.6" height="3.8" fill="#1b4f98"/><circle cx="7" cy="4" r="0.9" fill="#1b4f98"/></svg>
<div class="a" style="left:1526px;top:803px;width:138px;height:32px;background:linear-gradient(155deg,#0ab0c6 0%,#0781b8 18%,#0560a6 42%,#04489a 68%,#033f91 100%);border-radius:16px"></div>
<div class="t" style="left:1526px;width:138px;text-align:center;top:809.5px;height:20px;line-height:20px;font-size:13.5px;font-weight:bold;color:#fff;letter-spacing:-0.35px">Xuất biên lai điện tử</div>
<div class="a" style="left:1676px;top:803px;width:113px;height:32px;background:#fff;border:1.5px solid #2c5ea8;border-radius:16px"></div>
<div class="t" style="left:1676px;width:113px;text-align:center;top:807.5px;height:20px;line-height:20px;font-size:14.6px;font-weight:normal;color:#1a1a1a;-webkit-text-stroke:0.3px #1a1a1a;letter-spacing:-0.1px">Ghi tạm</div>
<div class="a" style="left:1801px;top:803px;width:113px;height:32px;background:#fff;border:1.5px solid #2c5ea8;border-radius:16px"></div>
<div class="t" style="left:1801px;width:113px;text-align:center;top:807.5px;height:20px;line-height:20px;font-size:14.6px;font-weight:normal;color:#1a1a1a;-webkit-text-stroke:0.3px #1a1a1a;letter-spacing:-0.1px">Quay lại</div>
<div class="a" style="left:0px;top:842px;width:1920px;height:37px;background:#fff"></div>
<svg style="left:16px;top:855px" width="16" height="16" viewBox="0 0 16 16"><rect x="0" y="0" width="16" height="16" rx="2.5" fill="#3a8fdc"/><rect x="3" y="3.5" width="10" height="7" fill="#e8f2fc"/><path d="M4 9.5 L12 4" stroke="#3a8fdc" stroke-width="1.5"/><rect x="5" y="12" width="6" height="1.2" fill="#e8f2fc"/></svg>
<div class="t" style="left:42px;top:852.0px;height:20px;line-height:20px;font-size:13.5px;font-weight:normal;color:#7a7a7a;">UltraViewer</div>
<svg style="left:131px;top:854px" width="17" height="16" viewBox="0 0 17 16"><rect x="0" y="0" width="17" height="16" rx="2.5" fill="#10499a"/><path d="M4 5 C3.5 8 6.5 12 9.5 12.5 L11 11 L9.5 9.5 L8.5 10 C7.5 9.5 6.5 8.5 6 7.5 L6.5 6.5 L5 5 Z" fill="#fff"/><path d="M9 4 A3 3 0 0 1 12 7 M9 2.5 A4.5 4.5 0 0 1 13.5 7" fill="none" stroke="#fff" stroke-width="0.9"/></svg>
<div class="t" style="left:160px;top:852.0px;height:20px;line-height:20px;font-size:13.5px;font-weight:normal;color:#6f6f6f;">Tổng đài hỗ trợ</div>
<div class="t" style="left:260px;top:852.0px;height:20px;line-height:20px;font-size:13.5px;font-weight:bold;color:#222;letter-spacing:0.25px">1900636767</div>
<svg style="left:1780px;top:843px" width="34" height="30" viewBox="0 0 34 30"><path d="M7.7 7 C12 6.8 18 7.2 21.8 9.3 C19 9.5 16 9.8 14 10.8 C14.5 16 16 21 18.5 26 C12 21 8.5 14 7.7 7 Z" fill="#2e9e46"/><path d="M14.3 14.5 L19.3 20.9 C23 18 28 13 30.6 9.3 C30 16 26 22 19.5 27 C17 23 15 19 14.3 14.5 Z" fill="#1f4e85"/><circle cx="19.7" cy="13.3" r="1.4" fill="#1f4e85"/><rect x="19" y="13.5" width="1.4" height="3.2" fill="#1f4e85"/></svg>
<div class="t" style="left:1822px;top:852.0px;height:20px;line-height:20px;font-size:12.3px;font-weight:normal;color:#6a6a6a;">Phiên bản 4.0.4</div>
</body></html>
